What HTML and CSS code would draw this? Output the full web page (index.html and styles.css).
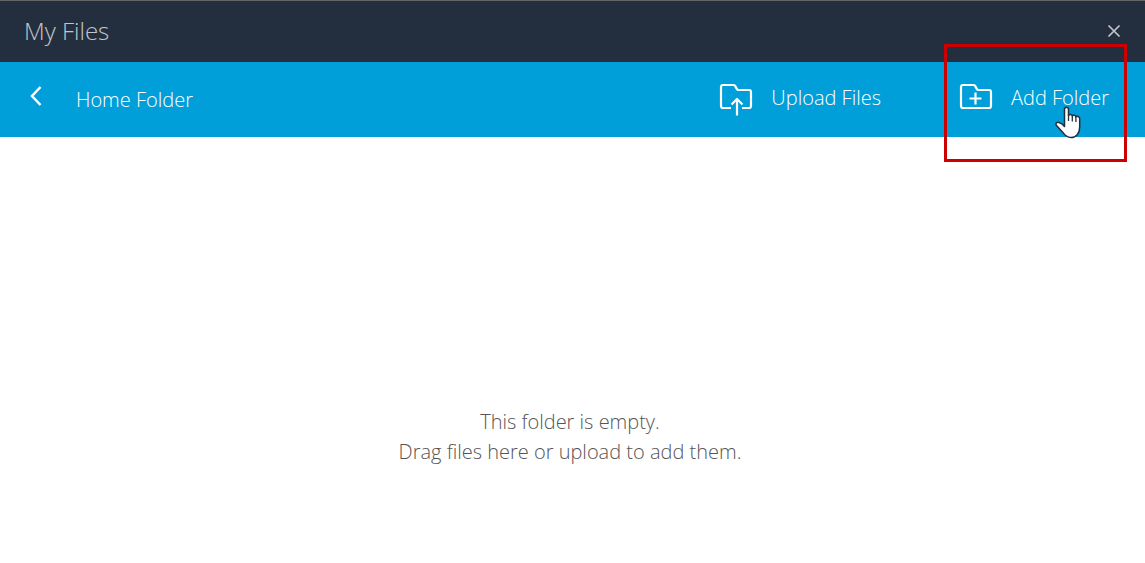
FILE: index.html
```
<!DOCTYPE html>
<html lang="en">
<head>
<meta charset="utf-8">
<meta name="viewport" content="width=device-width, initial-scale=1">
<title>My Files</title>
<link rel="stylesheet" href="styles.css">
</head>
<body>
<div class="app">
  <header class="titlebar">
    <h1 class="title">My Files</h1>
    <button class="close" type="button" aria-label="Close">
      <svg width="14" height="14" viewBox="0 0 14 14"><path d="M1.500 1.500l11 11M12.500 1.500l-11 11" fill="none" stroke="#c3c6c9" stroke-width="1.700"/></svg>
    </button>
  </header>
  <nav class="toolbar">
    <button class="back" type="button" aria-label="Back">
      <svg width="14" height="22" viewBox="0 0 14 22"><path d="M12.500 2L4 11l8.500 9" fill="none" stroke="#fff" stroke-width="2.500"/></svg>
    </button>
    <h2 class="folder">Home Folder</h2>
    <button class="action upload" type="button">
      <svg class="icon" width="34" height="34" viewBox="0 0 34 34" fill="none" stroke="#fff" stroke-width="2.200" stroke-linejoin="round"><path d="M12 25H4q-2 0-2-2V4q0-2 2-2h10.500q1 0 1.600.9l1.800 3.200q.5.900 1.600.900H30q2 0 2 2v14q0 2-2 2h-7"/><path d="M18 32.500V16M12.500 21.500L18 16l5.500 5.500"/></svg>
      <span>Upload Files</span>
    </button>
    <button class="action add" type="button">
      <svg class="icon" width="34" height="34" viewBox="0 0 34 34" fill="none" stroke="#fff" stroke-width="2.200" stroke-linejoin="round"><path d="M4 25q-2 0-2-2V4q0-2 2-2h10.500q1 0 1.600.9l1.800 3.200q.5.900 1.600.900H30q2 0 2 2v14q0 2-2 2z"/><path d="M10.500 15.500h12M16.500 9.500v12"/></svg>
      <span>Add Folder</span>
      <span class="highlight"></span>
      <svg class="pointer" width="26" height="33" viewBox="0 0 26 33"><path d="M9.500 18V3.500C9.500.4 13.500.4 13.500 3.500V9.500c.3-1.500 3.800-1.200 3.800.6.400-1.400 3.600-1 3.600.8.500-1.100 3.800-.6 3.800 1.700V21c0 6.500-3.700 10.500-8.700 10.500-3.500 0-6-1.800-7.900-4.800L1.500 19.500c-1.500-2 .4-3.700 2.500-3 2.200.6 4 2 5.500 4z" fill="#fff" stroke="#232f3e" stroke-width="1.500" stroke-linejoin="round"/><path d="M13.500 9v6M17.300 10v5.500M20.900 11v5" stroke="#232f3e" stroke-width="1.300"/></svg>
    </button>
  </nav>
  <main class="content">
    <p class="empty">This folder is empty.<br>Drag files here or upload to add them.</p>
  </main>
</div>
</body>
</html>
```
FILE: styles.css
```
* { box-sizing: border-box; }

body {
  margin: 0;
  background: #fff;
  font-family: "Open Sans", "Noto Sans", sans-serif;
  font-weight: 300;
  font-size: 20px;
  line-height: 30px;
}

.app {
  min-height: 100vh;
  display: flex;
  flex-direction: column;
}

h1, h2, p { margin: 0; font-weight: inherit; font-size: inherit; }

button {
  margin: 0;
  padding: 0;
  border: 0;
  background: none;
  color: inherit;
  font: inherit;
  cursor: pointer;
}

svg { display: block; }

.titlebar {
  display: flex;
  align-items: center;
  justify-content: space-between;
  height: 62px;
  padding: 0 24px 1px;
  border-top: 1px solid #666;
  background: #232f3e;
  color: #c3c6c9;
}

.title { font-size: 24px; }

.toolbar {
  display: flex;
  align-items: center;
  height: 75px;
  padding: 0 36px 4px 28px;
  background: #009fd9;
  color: #fff;
}

.back { padding-bottom: 3px; }

.folder {
  padding: 4px 0 0 34px;
  margin-right: auto;
}

.action {
  position: relative;
  display: flex;
  align-items: center;
  gap: 18px;
}

.action .icon { margin-top: 4px; }

.add { margin-left: 78px; }

.highlight {
  position: absolute;
  top: -35px;
  right: -18px;
  bottom: -45px;
  left: -15px;
  border: 3px solid #c00;
}

.pointer {
  position: absolute;
  right: 28px;
  bottom: -22px;
}

.content {
  flex: 1;
  display: flex;
  align-items: center;
  justify-content: center;
  padding: 174px 5px 0 0;
}

.empty {
  color: #555;
  text-align: center;
}
```
